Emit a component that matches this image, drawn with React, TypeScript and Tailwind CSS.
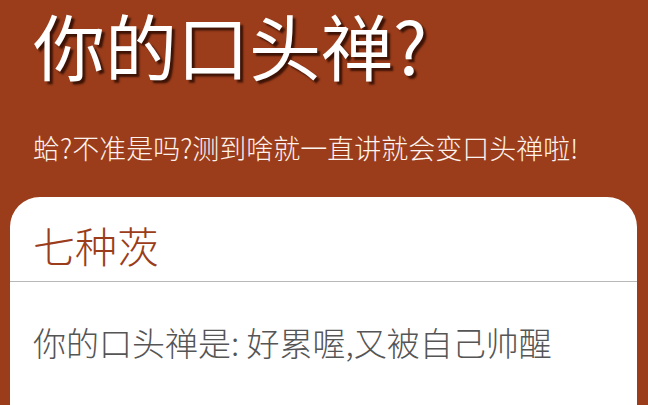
export default function App() {
  return (
    <div
      className="h-[405px] w-full overflow-hidden bg-[#9b3d1b]"
      style={{ fontFamily: '"Noto Sans CJK SC", "Noto Sans", sans-serif' }}
    >
      {/* Heading */}
      <div className="px-[33px] pt-[1px]">
        <h1 className="text-[72px] leading-[1.2] text-white [text-shadow:3px_3px_2px_rgba(45,12,2,0.85)]">
          你的口头禅?
        </h1>
        <p className="mt-[47px] text-[27px] leading-none font-light text-[#fdf3ee]">
          蛤?不准是吗?测到啥就一直讲就会变口头禅啦!
        </p>
      </div>

      {/* Result card */}
      <div className="mt-[36px] ml-[10px] mr-[11px] rounded-t-[30px] bg-white h-[300px]">
        <div className="px-[23px] pt-[27px] pb-[15px] border-b border-[#b8b8b8]">
          <h2 className="text-[42px] leading-none font-light text-[#9b3d1b]">七种茨</h2>
        </div>
        <div className="px-[23px] pt-[44px]">
          <p className="text-[33px] leading-none font-light text-[#555555]">
            你的口头禅是: 好累喔,又被自己帅醒
          </p>
        </div>
      </div>
    </div>
  );
}
